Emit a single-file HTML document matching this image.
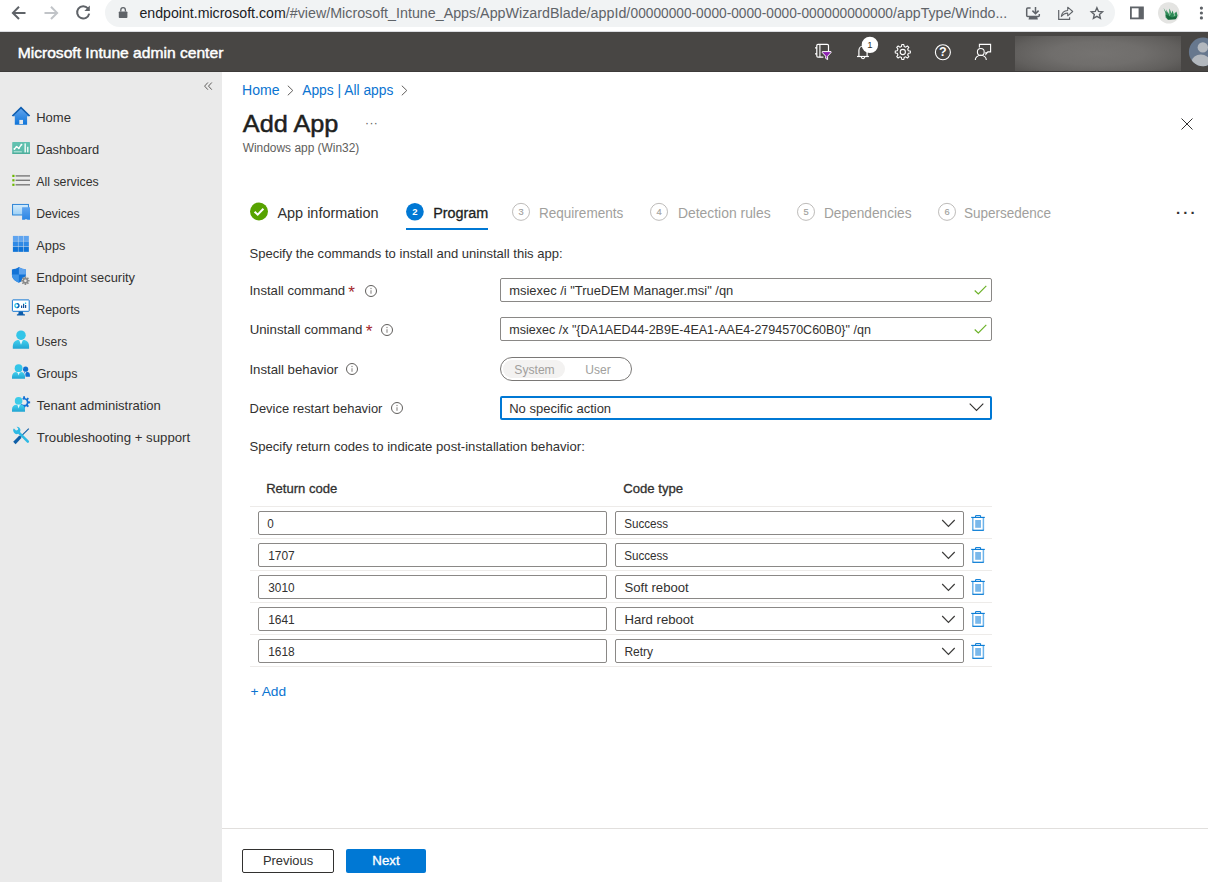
<!DOCTYPE html>
<html lang="en">
<head>
<meta charset="utf-8">
<title>Add App - Microsoft Intune admin center</title>
<style>
*{box-sizing:border-box;margin:0;padding:0}
html,body{width:1208px;height:882px;overflow:hidden;background:#fff}
body{font-family:"Liberation Sans",sans-serif;font-size:13px;color:#323130;position:relative}
.abs{position:absolute;white-space:nowrap}
#chrome{left:0;top:0;width:1208px;height:32px;background:#fff}
#omni{left:105px;top:-2px;width:1010px;height:29px;border-radius:14.5px;background:#f1f3f4}
.url{font-size:14px;line-height:16px;color:#5f6368}
.dk{color:#202124}
#hdr{left:0;top:32px;width:1208px;height:40px;background:#484644;border-bottom:1px solid #3d3b3a}
#title{font-size:15px;line-height:18px;font-weight:normal;-webkit-text-stroke:0.45px #fff;color:#fff}
#acct{left:1015px;top:36px;width:166px;height:35px;background:radial-gradient(ellipse 62% 75% at 50% 50%,#757371 0%,#706e6c 45%,#62605e 80%,#565452 100%)}
#avatar{left:1188px;top:36px}
#side{left:0;top:72px;width:222px;height:810px;background:#eaeaea}
.nav{font-size:13px;line-height:16px;color:#323130}
.lnk{color:#0b74d1}
.t13{font-size:13px;line-height:16px}
.t14{font-size:14px;line-height:18px}
.gray{color:#a19f9d}
#h1{font-size:24px;line-height:32px;font-weight:normal;-webkit-text-stroke:0.5px #201f1e;color:#201f1e}
#sub{font-size:12px;line-height:14px;color:#605e5c}
.inp{position:absolute;border:1px solid #8a8886;border-radius:2px;background:#fff;height:24px;font-size:13px;line-height:24px;padding-left:8px;white-space:nowrap;color:#323130}
.sep{position:absolute;left:250px;width:742px;height:1px;background:#edebe9}
.circ{position:absolute;width:18px;height:18px;border-radius:50%;border:1px solid #bebcba;color:#a19f9d;font-size:10px;line-height:16.5px;text-align:center;-webkit-text-stroke:0.25px #a19f9d}
.btn{height:24px;border-radius:2px;text-align:center;font-size:13px}
.sb{font-weight:normal;-webkit-text-stroke:0.3px currentColor}
</style>
</head>
<body>
<!-- BROWSER CHROME -->
<div id="chrome" class="abs"></div>
<div id="omni" class="abs"></div>
<div class="abs url dk" id="u0" style="left:140px;top:5px;display:inline-block;transform-origin:0 50%;transform:translateX(-0.60px) scaleX(1.0109)">endpoint.microsoft.com</div>
<div class="abs url" id="u1" style="left:286px;top:5px;display:inline-block;transform-origin:0 50%;transform:translateX(-0.20px) scaleX(1.0192)">/#view/Microsoft_Intune_Apps/</div>
<div class="abs url" id="u2" style="left:480px;top:5px;display:inline-block;transform-origin:0 50%;transform:translateX(0.10px) scaleX(1.0213)">AppWizardBlade/appId/</div>
<div class="abs url" id="u3" style="left:630px;top:5px;display:inline-block;transform-origin:0 50%;transform:translateX(0.50px) scaleX(0.9801)">00000000-0000-0000-0000-000000000000</div>
<div class="abs url" id="u4" style="left:893px;top:5px;display:inline-block;transform-origin:0 50%;transform:translateX(0.10px) scaleX(1.0112)">/appType/Windo...</div>
<div class="abs" style="left:0;top:31px;width:1208px;height:1px;background:#dadce0"></div>
<svg class="abs" style="left:0;top:0" width="140" height="31" viewBox="0 0 140 31">
<path d="M25.5 12.9 H13.6 M19 6.8 L12.9 12.9 L19 19" stroke="#5f6368" stroke-width="2" fill="none" stroke-linejoin="miter"/>
<path d="M44.5 12.9 H56.4 M51 6.8 L57.1 12.9 L51 19" stroke="#c1c4c8" stroke-width="2" fill="none"/>
<path d="M87.9 8.4 A6.1 6.1 0 1 0 89.2 13.6" stroke="#5f6368" stroke-width="2" fill="none"/>
<path d="M89.8 5.6 V11 H84.4 Z" fill="#5f6368"/>
<rect x="118.8" y="11.4" width="8.6" height="6.6" rx="0.8" fill="#5f6368"/>
<path d="M120.8 11.6 V10 a2.3 2.3 0 0 1 4.6 0 V11.6" stroke="#5f6368" stroke-width="1.3" fill="none"/>
</svg>
<svg class="abs" style="left:1020px;top:0" width="188" height="31" viewBox="1020 0 188 31">
<!-- install -->
<path d="M1030.6 8 H1027.7 a1 1 0 0 0 -1 1 V15.4 a1 1 0 0 0 1 1 H1038.3 a1 1 0 0 0 1 -1 V14" stroke="#5f6368" stroke-width="1.5" fill="none"/>
<path d="M1029.2 17.1 H1037.2 L1037.9 19.6 H1028.5 Z" fill="#5f6368"/>
<path d="M1035.5 6.9 V13.4 M1032.4 10.6 L1035.5 13.7 L1038.6 10.6" stroke="#5f6368" stroke-width="1.5" fill="none"/>
<!-- share -->
<path d="M1058.7 9.9 V19.3 H1069.6 V17.2" stroke="#5f6368" stroke-width="1.2" fill="none"/>
<path d="M1061.3 16.4 C1061.8 12.8 1064.2 10.8 1067.7 10.5 V7.2 L1072.7 11.5 L1067.7 15.8 V12.9 C1064.9 13 1062.9 14.2 1061.3 16.4 Z" stroke="#5f6368" stroke-width="1.05" fill="none" stroke-linejoin="round"/>
<!-- star -->
<path d="M1096.90 7.70 L1098.49 11.42 L1102.51 11.78 L1099.47 14.43 L1100.37 18.37 L1096.90 16.30 L1093.43 18.37 L1094.33 14.43 L1091.29 11.78 L1095.31 11.42 Z" stroke="#5f6368" stroke-width="1.4" fill="none" stroke-linejoin="miter"/>
<!-- side panel -->
<rect x="1130.9" y="7.4" width="12" height="11" stroke="#5f6368" stroke-width="1.8" fill="none"/>
<rect x="1138.6" y="7.4" width="4.6" height="11" fill="#5f6368"/>
<!-- profile -->
<circle cx="1168.7" cy="12.9" r="10.7" fill="#e4e4e2"/>
<path d="M1163.6 8 L1166.4 12.6 L1166.2 9.4 L1168.6 14 L1169.6 8.6 L1171.4 13.4 L1172.6 10.6 L1173.8 14.2 L1176.4 11.4 L1177.6 15.4 L1176 19 L1168 19.8 L1165.6 17.4 L1165.4 13 Z" fill="#2e8b57"/>
<path d="M1165.6 15 L1168 19.6 L1175.6 19.2 L1177.4 16 L1172 17.6 L1168.4 15.4 Z" fill="#17683c"/>
<path d="M1169.4 9.6 L1170.6 14.2 L1169.2 16.4 Z M1174.4 12.6 L1175.4 15.6 L1173.6 16.6 Z" fill="#8fc7a4"/>
<!-- menu -->
<circle cx="1201.4" cy="8.1" r="1.6" fill="#5f6368"/><circle cx="1201.4" cy="13" r="1.6" fill="#5f6368"/><circle cx="1201.4" cy="17.9" r="1.6" fill="#5f6368"/>
</svg>
<!-- HEADER -->
<div id="hdr" class="abs"></div>
<div class="abs " id="title" style="left:17px;top:44px;display:inline-block;transform-origin:0 50%;transform:translateX(0.71px) scaleX(1.0406)">Microsoft Intune admin center</div>
<div id="acct" class="abs"></div>
<svg id="avatar" class="abs" width="20" height="32" viewBox="1188 36 20 32"><defs><clipPath id="avc"><circle cx="1203.2" cy="51.9" r="14.3"/></clipPath></defs><circle cx="1203.2" cy="51.9" r="14.3" fill="#67788e"/><g clip-path="url(#avc)"><ellipse cx="1200.8" cy="61" rx="8.8" ry="6.4" fill="#b3b8be"/><circle cx="1202.8" cy="47.4" r="6.3" fill="#67788e"/><circle cx="1202.8" cy="47.4" r="5.2" fill="#b3b8be"/></g></svg>
<svg class="abs" style="left:800px;top:32px" width="210" height="40" viewBox="800 32 210 40">
<!-- directory + filter -->
<path d="M828.5 51 V45.6 a1.2 1.2 0 0 0 -1.2 -1.2 H818 a1.2 1.2 0 0 0 -1.2 1.2 V56 a1.2 1.2 0 0 0 1.2 1.2 H823.4" stroke="#fff" stroke-width="1.2" fill="none"/>
<path d="M819.9 44.4 V57.2" stroke="#fff" stroke-width="1.1"/>
<path d="M815 47.9 H817 M815 53.9 H817" stroke="#fff" stroke-width="1.3"/>
<path d="M822.3 51.6 H831 V52.6 L827.6 56.2 V59.6 L825.7 58.4 V56.2 L822.3 52.6 Z" fill="#8c22b0" stroke="#fff" stroke-width="1" stroke-linejoin="round"/>
<!-- bell -->
<path d="M857 56.5 H868.9" stroke="#fff" stroke-width="1.2" fill="none"/>
<path d="M858.9 56.4 V50.6 a4.1 4.6 0 0 1 8.2 0 V56.4" stroke="#fff" stroke-width="1.2" fill="none"/>
<path d="M861.3 57 a1.7 1.6 0 0 0 3.4 0" stroke="#fff" stroke-width="1.1" fill="none"/>
<circle cx="869.9" cy="44.9" r="8.2" fill="#fff"/>
<!-- gear -->
<g stroke="#fff" fill="none" stroke-width="1.1">
<circle cx="902.8" cy="52" r="2.6"/>
<path id="gearp" d="M901.47 46.46 L901.79 44.47 L903.81 44.47 L904.13 46.46 L905.78 47.14 L907.41 45.96 L908.84 47.39 L907.66 49.02 L908.34 50.67 L910.33 50.99 L910.33 53.01 L908.34 53.33 L907.66 54.98 L908.84 56.61 L907.41 58.04 L905.78 56.86 L904.13 57.54 L903.81 59.53 L901.79 59.53 L901.47 57.54 L899.82 56.86 L898.19 58.04 L896.76 56.61 L897.94 54.98 L897.26 53.33 L895.27 53.01 L895.27 50.99 L897.26 50.67 L897.94 49.02 L896.76 47.39 L898.19 45.96 L899.82 47.14 Z" stroke-linejoin="round"/>
</g>
<!-- help -->
<circle cx="942.9" cy="52.3" r="7.5" stroke="#fff" stroke-width="1.1" fill="none"/>
<!-- feedback -->
<path d="M979.4 47.6 V44.4 H990.6 V51.9 H987.8 L985.9 54.2 V51.9" stroke="#fff" stroke-width="1.1" fill="none"/>
<circle cx="980.8" cy="51.9" r="3.4" stroke="#fff" stroke-width="1.1" fill="none"/>
<path d="M975.3 60 a5.5 4.8 0 0 1 11 0" stroke="#fff" stroke-width="1.1" fill="none"/>
</svg>
<div class="abs" style="left:865.8px;top:39.4px;width:8px;text-align:center;font-size:9.5px;line-height:12px;color:#323130">1</div>
<div class="abs" style="left:938.9px;top:44.6px;width:8px;text-align:center;font-size:12.5px;line-height:15px;color:#fff;font-weight:bold">?</div>
<!-- SIDEBAR -->
<div id="side" class="abs"></div>
<svg class="abs" style="left:204px;top:82px" width="9" height="9" viewBox="0 0 9 9"><path d="M3.9 0.5 L0.6 4.1 L3.9 7.7 M7.8 0.5 L4.5 4.1 L7.8 7.7" stroke="#605e5c" stroke-width="1" fill="none"/></svg>
<div class="abs nav" id="n0" style="left:36px;top:110px;display:inline-block;transform-origin:0 50%;transform:translateX(0.13px) scaleX(1.0020)">Home</div>
<div class="abs nav" id="n1" style="left:36px;top:142px;display:inline-block;transform-origin:0 50%;transform:translateX(0.16px) scaleX(0.9895)">Dashboard</div>
<div class="abs nav" id="n2" style="left:36px;top:174px;display:inline-block;transform-origin:0 50%;transform:translateX(0.32px) scaleX(0.9485)">All services</div>
<div class="abs nav" id="n3" style="left:36px;top:206px;display:inline-block;transform-origin:0 50%;transform:translateX(0.25px) scaleX(0.9397)">Devices</div>
<div class="abs nav" id="n4" style="left:36px;top:238px;display:inline-block;transform-origin:0 50%;transform:translateX(0.33px) scaleX(0.9792)">Apps</div>
<div class="abs nav" id="n5" style="left:36px;top:270px;display:inline-block;transform-origin:0 50%;transform:translateX(0.14px) scaleX(0.9916)">Endpoint security</div>
<div class="abs nav" id="n6" style="left:36px;top:302px;display:inline-block;transform-origin:0 50%;transform:translateX(0.18px) scaleX(0.9588)">Reports</div>
<div class="abs nav" id="n7" style="left:36px;top:334px;display:inline-block;transform-origin:0 50%;transform:translateX(0.02px) scaleX(0.9160)">Users</div>
<div class="abs nav" id="n8" style="left:36px;top:366px;display:inline-block;transform-origin:0 50%;transform:translateX(0.63px) scaleX(0.9566)">Groups</div>
<div class="abs nav" id="n9" style="left:36px;top:398px;display:inline-block;transform-origin:0 50%;transform:translateX(0.84px) scaleX(1.0034)">Tenant administration</div>
<div class="abs nav" id="n10" style="left:36px;top:430px;display:inline-block;transform-origin:0 50%;transform:translateX(0.84px) scaleX(1.0159)">Troubleshooting + support</div>
<svg class="abs" style="left:8px;top:100px" width="28" height="350" viewBox="8 100 28 350">
<defs>
<linearGradient id="gb" x1="0" y1="0" x2="0" y2="1"><stop offset="0" stop-color="#0f6cbd"/><stop offset="1" stop-color="#3a96e6"/></linearGradient>
<linearGradient id="gb2" x1="0" y1="0" x2="0" y2="1"><stop offset="0" stop-color="#5ea9ec"/><stop offset="1" stop-color="#0f6cbd"/></linearGradient>
<linearGradient id="gc" x1="0" y1="0" x2="0" y2="1"><stop offset="0" stop-color="#42d0ee"/><stop offset="1" stop-color="#20a4d2"/></linearGradient>
<linearGradient id="gl" x1="0" y1="0" x2="0" y2="1"><stop offset="0" stop-color="#d6ecfb"/><stop offset="1" stop-color="#9dd0f5"/></linearGradient>
<linearGradient id="gh" x1="0" y1="0" x2="0" y2="1"><stop offset="0" stop-color="#5fa4ef"/><stop offset="1" stop-color="#0f74d8"/></linearGradient>
<linearGradient id="gd" x1="0" y1="0" x2="0" y2="1"><stop offset="0" stop-color="#64c2b1"/><stop offset="0.8" stop-color="#5bbba9"/><stop offset="1" stop-color="#48a896"/></linearGradient>
<linearGradient id="gp" x1="0" y1="0" x2="0" y2="1"><stop offset="0" stop-color="#5fa4ef"/><stop offset="1" stop-color="#2a86e4"/></linearGradient>
</defs>
<!-- home -->
<path d="M21 108.4 L29 116.2 H27.1 V124.8 H14.8 V116.2 H13 Z" fill="url(#gh)"/>
<path d="M12.4 116 L21 107.7 L29.6 116" stroke="#0b5cb0" stroke-width="1.7" fill="none"/>
<rect x="19.3" y="119.9" width="3.7" height="4.2" fill="#e6e8ea"/>
<!-- dashboard -->
<rect x="12.2" y="142.1" width="17.8" height="12" rx="0.6" fill="url(#gd)"/>
<path d="M14.2 149.2 L16.6 146.6 L18.8 148.4 L21.6 144.4" stroke="#fff" stroke-width="1.3" fill="none"/>
<circle cx="14.4" cy="149" r="0.9" fill="#fff"/><circle cx="16.6" cy="146.8" r="0.9" fill="#fff"/><circle cx="18.8" cy="148.3" r="0.9" fill="#fff"/><circle cx="21.5" cy="144.6" r="0.9" fill="#fff"/>
<path d="M13.8 151.8 H21.8" stroke="#b9e4db" stroke-width="1.1"/>
<rect x="24.4" y="143.4" width="1.6" height="9" fill="#e4f5f1"/><rect x="27" y="146.8" width="1.5" height="5.6" fill="#e4f5f1"/>
<!-- all services -->
<g fill="#6bb700"><rect x="12.3" y="174.8" width="2.2" height="2.2"/><rect x="12.3" y="179.2" width="2.2" height="2.2"/><rect x="12.3" y="183.7" width="2.2" height="2.2"/></g>
<g fill="#7a7a7a"><rect x="15.6" y="175.2" width="14.4" height="1.4"/><rect x="15.6" y="179.6" width="14.4" height="1.4"/><rect x="15.6" y="184.1" width="14.4" height="1.4"/></g>
<!-- devices -->
<rect x="12.6" y="204.4" width="15.8" height="10.6" fill="url(#gl)" stroke="#1a7ad4" stroke-width="0.9"/>
<path d="M22.1 207.3 H30 V219.8 H27.4 L27 219.3 H25.1 L24.7 219.8 H22.1 Z" fill="url(#gp)"/>
<!-- apps -->
<g><rect x="12.9" y="235.9" width="5.05" height="5.05" fill="#5fa4ef"/><rect x="18.35" y="235.9" width="5.05" height="5.05" fill="#5fa4ef"/><rect x="23.8" y="235.9" width="5.05" height="5.05" fill="#5fa4ef"/><rect x="12.9" y="241.35" width="5.05" height="5.05" fill="#2f8ae6"/><rect x="18.35" y="241.35" width="5.05" height="5.05" fill="#2f8ae6"/><rect x="23.8" y="241.35" width="5.05" height="5.05" fill="#2f8ae6"/><rect x="12.9" y="246.8" width="5.05" height="5.05" fill="#0f74d8"/><rect x="18.35" y="246.8" width="5.05" height="5.05" fill="#0f74d8"/><rect x="23.8" y="246.8" width="5.05" height="5.05" fill="#0f74d8"/></g>
<!-- endpoint security -->
<path d="M18.9 267.1 C16.8 268.6 14.4 269.3 11.9 269.4 V274.6 C11.9 278.6 14.9 281.2 18.9 282.8 C22.9 281.2 25.9 278.6 25.9 274.6 V269.4 C23.4 269.3 21 268.6 18.9 267.1 Z" fill="#1272d6"/>
<path d="M18.9 267.1 C21 268.6 23.4 269.3 25.9 269.4 V274.6 H18.9 Z" fill="#5ea3ee"/>
<path d="M11.9 274.6 H18.9 V282.8 C14.9 281.2 11.9 278.6 11.9 274.6 Z" fill="#3e94e8"/>
<circle cx="25.4" cy="280.8" r="3.4" fill="#8a8a8a" stroke="#eaeaea" stroke-width="0.8"/>
<g stroke="#8a8a8a" stroke-width="1.6"><path d="M25.4 276.6 V285 M21.2 280.8 H29.6 M22.4 277.8 L28.4 283.8 M28.4 277.8 L22.4 283.8"/></g>
<circle cx="25.4" cy="280.8" r="1.3" fill="#eaeaea"/>
<!-- reports -->
<rect x="12.4" y="299.9" width="16.8" height="11.4" rx="0.6" fill="#fff" stroke="#1478d4" stroke-width="1"/>
<path d="M18.8 311.6 H22.8 L23.4 314.3 H24.9 V315.6 H16.9 V314.3 H18.2 Z" fill="#0b5cab"/>
<circle cx="16.9" cy="305.6" r="2" stroke="#2bc0e4" stroke-width="1.2" fill="none"/>
<path d="M16.9 303.6 a2 2 0 0 1 0 4" stroke="#0f5fb8" stroke-width="1.2" fill="none"/>
<path d="M21.6 308 V305.6 M23.6 308 V304 M25.6 308 V305" stroke="#0f4f9a" stroke-width="1.2"/>
<path d="M25.6 304 V302.6 M23.6 303.6 V303" stroke="#2bc0e4" stroke-width="1.2"/>
<!-- users -->
<path d="M12.8 348.8 V346.4 C12.8 342.4 15.4 340 18.6 340 H23.4 C26.6 340 29.1 342.4 29.1 346.4 V348.8 Z" fill="url(#gc)"/>
<circle cx="21" cy="335.2" r="5.4" fill="#eaeaea"/>
<circle cx="21" cy="335.2" r="4.75" fill="#33c5e8"/>
<path d="M19.2 340 L21 344.8 L22.8 340 Z" fill="#eaf7fb"/>
<!-- groups -->
<circle cx="25.6" cy="369.2" r="2.6" fill="#0f6fd0"/>
<path d="M22.6 376.7 V375 C22.6 373 23.8 372 25.2 372 H27.4 C28.8 372 29.9 373 29.9 375 V376.7 Z" fill="#0f6fd0"/>
<path d="M24.9 372 L25.6 374.4 L26.3 372 Z" fill="#cfe4f8"/>
<path d="M11.4 379.3 V376.4 C11.4 373.2 13.6 371.3 16 371.3 H21.2 C23.6 371.3 25.6 373.2 25.6 376.4 V379.3 Z" fill="#eaeaea"/>
<path d="M12 378.7 V376.6 C12 373.6 14 371.9 16.2 371.9 H21 C23.2 371.9 25 373.6 25 376.6 V378.7 Z" fill="url(#gc)"/>
<circle cx="18.6" cy="368.2" r="4.5" fill="#eaeaea"/>
<circle cx="18.6" cy="368.2" r="3.9" fill="#33c5e8"/>
<path d="M17.3 371.9 L18.6 375.6 L19.9 371.9 Z" fill="#eaf7fb"/>
<!-- tenant admin -->
<path d="M23.07 398.12 L23.24 396.36 L24.96 396.36 L25.13 398.12 L26.40 398.65 L27.76 397.52 L28.98 398.74 L27.85 400.10 L28.38 401.37 L30.14 401.54 L30.14 403.26 L28.38 403.43 L27.85 404.70 L28.98 406.06 L27.76 407.28 L26.40 406.15 L25.13 406.68 L24.96 408.44 L23.24 408.44 L23.07 406.68 L21.80 406.15 L20.44 407.28 L19.22 406.06 L20.35 404.70 L19.82 403.43 L18.06 403.26 L18.06 401.54 L19.82 401.37 L20.35 400.10 L19.22 398.74 L20.44 397.52 L21.80 398.65 Z" fill="#1170d6"/>
<circle cx="24.1" cy="402.2" r="2.6" fill="#eaeaea"/>
<circle cx="18.6" cy="400.9" r="4.5" fill="#eaeaea"/>
<circle cx="18.6" cy="400.9" r="3.8" fill="#3ccbe8"/>
<path d="M12 411.8 V409.4 C12 406.4 14 404.8 16.4 404.8 H20.8 C23.2 404.8 25 406.4 25 409.4 V411.8 Z" fill="url(#gc)"/>
<path d="M17.3 404.8 L18.6 408.6 L19.9 404.8 Z" fill="#eaf7fb"/>
<!-- troubleshooting -->
<path d="M28.4 428.2 L29.2 429 L20.6 437.6 L19.8 436.8 Z" fill="#0f5fa8"/>
<path d="M19.4 435.6 L21.6 437.8 L15.6 444.2 L13.2 441.8 Z" fill="#0f5fa8"/>
<path d="M13.2 430.6 C13 429.6 13.4 428.8 14 428.4 L16 430.4 L17.8 430 L18.2 428.4 L16.6 426.8 C18.4 426.6 20 427.8 20.4 429.6 C20.6 430.6 20.4 431.4 20 432 L28.8 440.8 C29.8 441.8 28.2 443.6 27 442.6 L18.2 433.8 C17.4 434.2 16.4 434.2 15.6 434 C14.2 433.4 13.4 432 13.2 430.6 Z" fill="#2db9e4"/>
</svg>
<!-- CONTENT -->
<div class="abs t14 lnk" id="bc1" style="left:242px;top:81px;display:inline-block;transform-origin:0 50%;transform:translateX(0.02px) scaleX(1.0048)">Home</div>
<svg class="abs" style="left:287px;top:85px" width="7" height="11" viewBox="0 0 7 11"><path d="M0.8 0.7 L5.8 5.5 L0.8 10.3" stroke="#605e5c" stroke-width="1" fill="none"/></svg>
<div class="abs t14 lnk" id="bc2" style="left:302px;top:81px;display:inline-block;transform-origin:0 50%;transform:translateX(0.17px) scaleX(0.9873)">Apps | All apps</div>
<svg class="abs" style="left:401px;top:85px" width="7" height="11" viewBox="0 0 7 11"><path d="M0.8 0.7 L5.8 5.5 L0.8 10.3" stroke="#605e5c" stroke-width="1" fill="none"/></svg>
<div class="abs " id="h1" style="left:242px;top:108px;display:inline-block;transform-origin:0 50%;transform:translateX(0.85px) scaleX(1.0526)">Add App</div>
<div class="abs" id="h1dots" style="left:365px;top:115px;font-size:12px;line-height:16px;color:#605e5c;letter-spacing:0.4px">···</div>
<div class="abs " id="sub" style="left:242px;top:141px;display:inline-block;transform-origin:0 50%;transform:translateX(0.70px) scaleX(0.9935)">Windows app (Win32)</div>
<svg class="abs" style="left:1180px;top:117px" width="14" height="14" viewBox="0 0 14 14"><path d="M1.5 1.5 L12.5 12.5 M12.5 1.5 L1.5 12.5" stroke="#323130" stroke-width="1" fill="none"/></svg>
<!-- tabs -->
<svg class="abs" style="left:250px;top:202px" width="18" height="19" viewBox="0 0 18 19"><circle cx="9" cy="9.5" r="9" fill="#57a300"/><path d="M4.6 9.7 L7.7 12.7 L13.4 6.7" stroke="#fff" stroke-width="2" fill="none"/></svg>
<div class="abs t14" id="tab1" style="left:277px;top:204px;display:inline-block;transform-origin:0 50%;transform:translateX(0.44px) scaleX(1.0316);color:#323130">App information</div>
<svg class="abs" style="left:404px;top:200px" width="22" height="24" viewBox="0 0 22 24"><circle cx="10.9" cy="11.75" r="8.85" fill="#0078d4"/><text x="10.9" y="15.1" text-anchor="middle" font-family="Liberation Sans, sans-serif" font-size="9.5" font-weight="bold" fill="#fff">2</text></svg>
<div class="abs t14 sb" id="tab2" style="left:433px;top:204px;display:inline-block;transform-origin:0 50%;transform:translateX(0.21px) scaleX(1.0270);color:#201f1e">Program</div>
<div class="abs" style="left:406px;top:227.6px;width:82px;height:2.4px;background:#0078d4"></div>
<svg class="abs" style="left:511px;top:200px" width="22" height="24" viewBox="0 0 22 24"><circle cx="10" cy="11.85" r="8.5" fill="none" stroke="#bebcba" stroke-width="1"/><text x="10.1" y="15" text-anchor="middle" font-family="Liberation Sans, sans-serif" font-size="9.3" fill="#a19f9d" stroke="#a19f9d" stroke-width="0.15">3</text></svg>
<div class="abs t14 gray" id="tab3" style="left:539px;top:204px;display:inline-block;transform-origin:0 50%;transform:translateX(-0.05px) scaleX(0.9674)">Requirements</div>
<svg class="abs" style="left:649px;top:200px" width="22" height="24" viewBox="0 0 22 24"><circle cx="10" cy="11.85" r="8.5" fill="none" stroke="#bebcba" stroke-width="1"/><text x="10.1" y="15" text-anchor="middle" font-family="Liberation Sans, sans-serif" font-size="9.3" fill="#a19f9d" stroke="#a19f9d" stroke-width="0.15">4</text></svg>
<div class="abs t14 gray" id="tab4" style="left:677px;top:204px;display:inline-block;transform-origin:0 50%;transform:translateX(0.92px) scaleX(0.9930)">Detection rules</div>
<svg class="abs" style="left:796px;top:200px" width="22" height="24" viewBox="0 0 22 24"><circle cx="10" cy="11.85" r="8.5" fill="none" stroke="#bebcba" stroke-width="1"/><text x="10.1" y="15" text-anchor="middle" font-family="Liberation Sans, sans-serif" font-size="9.3" fill="#a19f9d" stroke="#a19f9d" stroke-width="0.15">5</text></svg>
<div class="abs t14 gray" id="tab5" style="left:824px;top:204px;display:inline-block;transform-origin:0 50%;transform:translateX(-0.05px) scaleX(0.9790)">Dependencies</div>
<svg class="abs" style="left:937px;top:200px" width="22" height="24" viewBox="0 0 22 24"><circle cx="10" cy="11.85" r="8.5" fill="none" stroke="#bebcba" stroke-width="1"/><text x="10.1" y="15" text-anchor="middle" font-family="Liberation Sans, sans-serif" font-size="9.3" fill="#a19f9d" stroke="#a19f9d" stroke-width="0.15">6</text></svg>
<div class="abs t14 gray" id="tab6" style="left:964px;top:204px;display:inline-block;transform-origin:0 50%;transform:translateX(-0.10px) scaleX(0.9658)">Supersedence</div>
<div class="abs" id="tabdots" style="left:1176px;top:204.5px;font-size:15px;line-height:16px;color:#323130;letter-spacing:2.2px;font-weight:bold">···</div>
<!-- form -->
<div class="abs t13" id="p1" style="left:250px;top:246px;display:inline-block;transform-origin:0 50%;transform:translateX(-0.51px) scaleX(1.0029)">Specify the commands to install and uninstall this app:</div>
<div class="abs t13" id="l1" style="left:250px;top:283px;display:inline-block;transform-origin:0 50%;transform:translateX(-0.56px) scaleX(1.0106)">Install command <span style="color:#a4262c;font-size:17px;line-height:0;position:relative;top:3px;left:-0.5px">*</span></div>
<svg class="abs" style="left:364px;top:283.8px" width="14" height="14" viewBox="0 0 14 14"><circle cx="7" cy="7" r="5.5" stroke="#605e5c" stroke-width="1" fill="none"/><path d="M7 6.2 V9.8" stroke="#8a8886" stroke-width="1.1"/><circle cx="7" cy="4.5" r="0.7" fill="#8a8886"/></svg>
<div class="inp" style="left:500px;top:278px;width:492px"><span id="i1" style="display:inline-block;transform-origin:0 50%;transform:translateX(0.22px) scaleX(0.9936)">msiexec /i "TrueDEM Manager.msi" /qn</span></div>
<div class="abs t13" id="l2" style="left:250px;top:322px;display:inline-block;transform-origin:0 50%;transform:translateX(-0.34px) scaleX(1.0206)">Uninstall command <span style="color:#a4262c;font-size:17px;line-height:0;position:relative;top:3px;left:-0.5px">*</span></div>
<svg class="abs" style="left:380px;top:322.7px" width="14" height="14" viewBox="0 0 14 14"><circle cx="7" cy="7" r="5.5" stroke="#605e5c" stroke-width="1" fill="none"/><path d="M7 6.2 V9.8" stroke="#8a8886" stroke-width="1.1"/><circle cx="7" cy="4.5" r="0.7" fill="#8a8886"/></svg>
<div class="inp" style="left:500px;top:317px;width:492px"><span id="i2" style="display:inline-block;transform-origin:0 50%;transform:translateX(0.30px) scaleX(0.9626)">msiexec /x "{DA1AED44-2B9E-4EA1-AAE4-2794570C60B0}" /qn</span></div>
<div class="abs t13" id="l3" style="left:250px;top:362px;display:inline-block;transform-origin:0 50%;transform:translateX(-0.58px) scaleX(1.0160)">Install behavior</div>
<svg class="abs" style="left:345.1px;top:361.9px" width="14" height="14" viewBox="0 0 14 14"><circle cx="7" cy="7" r="5.5" stroke="#605e5c" stroke-width="1" fill="none"/><path d="M7 6.2 V9.8" stroke="#8a8886" stroke-width="1.1"/><circle cx="7" cy="4.5" r="0.7" fill="#8a8886"/></svg>
<div class="abs" style="left:500px;top:357px;width:132px;height:24px;border:1px solid #7a7876;border-radius:12px;background:#fff"></div>
<div class="abs" style="left:502.5px;top:360px;width:62px;height:18px;border-radius:9px;background:#f3f2f1"></div>
<div class="abs t13 gray" id="tg1" style="left:514px;top:362px;display:inline-block;transform-origin:0 50%;transform:translateX(0.31px) scaleX(0.9323)">System</div>
<div class="abs t13 gray" id="tg2" style="left:585px;top:362px;display:inline-block;transform-origin:0 50%;transform:translateX(0.33px) scaleX(0.9254)">User</div>
<div class="abs t13" id="l4" style="left:250px;top:401px;display:inline-block;transform-origin:0 50%;transform:translateX(-0.41px) scaleX(0.9937)">Device restart behavior</div>
<svg class="abs" style="left:390.1px;top:400.9px" width="14" height="14" viewBox="0 0 14 14"><circle cx="7" cy="7" r="5.5" stroke="#605e5c" stroke-width="1" fill="none"/><path d="M7 6.2 V9.8" stroke="#8a8886" stroke-width="1.1"/><circle cx="7" cy="4.5" r="0.7" fill="#8a8886"/></svg>
<div class="inp" style="left:500px;top:396px;width:492px;height:24px;border:2px solid #0078d4;padding-left:7px;line-height:22px"><span id="i3" style="display:inline-block;transform-origin:0 50%;transform:translateX(0.19px) scaleX(1.0003)">No specific action</span></div>
<div class="abs t13" id="p2" style="left:250px;top:439px;display:inline-block;transform-origin:0 50%;transform:translateX(-0.59px) scaleX(1.0089)">Specify return codes to indicate post-installation behavior:</div>
<div class="abs t13 sb" id="th1" style="left:266px;top:481px;display:inline-block;transform-origin:0 50%;transform:translateX(0.17px) scaleX(1.0051);color:#323130">Return code</div>
<div class="abs t13 sb" id="th2" style="left:623px;top:481px;display:inline-block;transform-origin:0 50%;transform:translateX(0.27px) scaleX(1.0104);color:#323130">Code type</div>
<div class="sep" style="top:506px"></div>
<div class="inp" style="left:258px;top:511px;width:349px;line-height:23px"><span id="ra0" style="display:inline-block;transform-origin:0 50%;transform:translateX(0.37px) scaleX(0.8969)">0</span></div>
<div class="inp" style="left:615px;top:511px;width:349px;line-height:23px"><span id="rb0" style="display:inline-block;transform-origin:0 50%;transform:translateX(0.19px) scaleX(0.8951)">Success</span></div>
<svg class="abs" style="left:941px;top:519px" width="15" height="9" viewBox="0 0 15 9"><path d="M1.2 1 L7.45 7.4 L13.7 1" stroke="#3b3a39" stroke-width="1.15" fill="none"/></svg>
<svg class="abs" style="left:970px;top:514px" width="16" height="18" viewBox="970 514 16 18"><path d="M971.2 517.4 H984.8" stroke="#0078d4" stroke-width="1.1" fill="none"/><path d="M975.6 517 V515.6 H980.6 V517" stroke="#0078d4" stroke-width="1" fill="none"/><path d="M972.8 518 V530.2 M983.4 518 V530.2" stroke="#6db3ea" stroke-width="1.5" fill="none"/><path d="M972.4 530.3 H983.8" stroke="#0078d4" stroke-width="1.2"/><rect x="975.2" y="520" width="5.8" height="7.8" fill="#7ab8ea"/></svg>
<div class="sep" style="top:538px"></div>
<div class="inp" style="left:258px;top:543px;width:349px;line-height:23px"><span id="ra1" style="display:inline-block;transform-origin:0 50%;transform:translateX(1.17px) scaleX(0.9186)">1707</span></div>
<div class="inp" style="left:615px;top:543px;width:349px;line-height:23px"><span id="rb1" style="display:inline-block;transform-origin:0 50%;transform:translateX(0.19px) scaleX(0.8951)">Success</span></div>
<svg class="abs" style="left:941px;top:551px" width="15" height="9" viewBox="0 0 15 9"><path d="M1.2 1 L7.45 7.4 L13.7 1" stroke="#3b3a39" stroke-width="1.15" fill="none"/></svg>
<svg class="abs" style="left:970px;top:546px" width="16" height="18" viewBox="970 514 16 18"><path d="M971.2 517.4 H984.8" stroke="#0078d4" stroke-width="1.1" fill="none"/><path d="M975.6 517 V515.6 H980.6 V517" stroke="#0078d4" stroke-width="1" fill="none"/><path d="M972.8 518 V530.2 M983.4 518 V530.2" stroke="#6db3ea" stroke-width="1.5" fill="none"/><path d="M972.4 530.3 H983.8" stroke="#0078d4" stroke-width="1.2"/><rect x="975.2" y="520" width="5.8" height="7.8" fill="#7ab8ea"/></svg>
<div class="sep" style="top:570px"></div>
<div class="inp" style="left:258px;top:575px;width:349px;line-height:23px"><span id="ra2" style="display:inline-block;transform-origin:0 50%;transform:translateX(1.28px) scaleX(0.9080)">3010</span></div>
<div class="inp" style="left:615px;top:575px;width:349px;line-height:23px"><span id="rb2" style="display:inline-block;transform-origin:0 50%;transform:translateX(0.49px) scaleX(1.0099)">Soft reboot</span></div>
<svg class="abs" style="left:941px;top:583px" width="15" height="9" viewBox="0 0 15 9"><path d="M1.2 1 L7.45 7.4 L13.7 1" stroke="#3b3a39" stroke-width="1.15" fill="none"/></svg>
<svg class="abs" style="left:970px;top:578px" width="16" height="18" viewBox="970 514 16 18"><path d="M971.2 517.4 H984.8" stroke="#0078d4" stroke-width="1.1" fill="none"/><path d="M975.6 517 V515.6 H980.6 V517" stroke="#0078d4" stroke-width="1" fill="none"/><path d="M972.8 518 V530.2 M983.4 518 V530.2" stroke="#6db3ea" stroke-width="1.5" fill="none"/><path d="M972.4 530.3 H983.8" stroke="#0078d4" stroke-width="1.2"/><rect x="975.2" y="520" width="5.8" height="7.8" fill="#7ab8ea"/></svg>
<div class="sep" style="top:602px"></div>
<div class="inp" style="left:258px;top:607px;width:349px;line-height:23px"><span id="ra3" style="display:inline-block;transform-origin:0 50%;transform:translateX(1.17px) scaleX(0.9177)">1641</span></div>
<div class="inp" style="left:615px;top:607px;width:349px;line-height:23px"><span id="rb3" style="display:inline-block;transform-origin:0 50%;transform:translateX(0.41px) scaleX(1.0103)">Hard reboot</span></div>
<svg class="abs" style="left:941px;top:615px" width="15" height="9" viewBox="0 0 15 9"><path d="M1.2 1 L7.45 7.4 L13.7 1" stroke="#3b3a39" stroke-width="1.15" fill="none"/></svg>
<svg class="abs" style="left:970px;top:610px" width="16" height="18" viewBox="970 514 16 18"><path d="M971.2 517.4 H984.8" stroke="#0078d4" stroke-width="1.1" fill="none"/><path d="M975.6 517 V515.6 H980.6 V517" stroke="#0078d4" stroke-width="1" fill="none"/><path d="M972.8 518 V530.2 M983.4 518 V530.2" stroke="#6db3ea" stroke-width="1.5" fill="none"/><path d="M972.4 530.3 H983.8" stroke="#0078d4" stroke-width="1.2"/><rect x="975.2" y="520" width="5.8" height="7.8" fill="#7ab8ea"/></svg>
<div class="sep" style="top:634px"></div>
<div class="inp" style="left:258px;top:639px;width:349px;line-height:23px"><span id="ra4" style="display:inline-block;transform-origin:0 50%;transform:translateX(1.17px) scaleX(0.9169)">1618</span></div>
<div class="inp" style="left:615px;top:639px;width:349px;line-height:23px"><span id="rb4" style="display:inline-block;transform-origin:0 50%;transform:translateX(0.38px) scaleX(0.9234)">Retry</span></div>
<svg class="abs" style="left:941px;top:647px" width="15" height="9" viewBox="0 0 15 9"><path d="M1.2 1 L7.45 7.4 L13.7 1" stroke="#3b3a39" stroke-width="1.15" fill="none"/></svg>
<svg class="abs" style="left:970px;top:642px" width="16" height="18" viewBox="970 514 16 18"><path d="M971.2 517.4 H984.8" stroke="#0078d4" stroke-width="1.1" fill="none"/><path d="M975.6 517 V515.6 H980.6 V517" stroke="#0078d4" stroke-width="1" fill="none"/><path d="M972.8 518 V530.2 M983.4 518 V530.2" stroke="#6db3ea" stroke-width="1.5" fill="none"/><path d="M972.4 530.3 H983.8" stroke="#0078d4" stroke-width="1.2"/><rect x="975.2" y="520" width="5.8" height="7.8" fill="#7ab8ea"/></svg>
<div class="sep" style="top:666px"></div>
<div class="abs t13 lnk" id="add" style="left:251px;top:684px;display:inline-block;transform-origin:0 50%;transform:translateX(-0.39px) scaleX(1.0544)">+ Add</div>
<svg class="abs" style="left:969px;top:403px" width="15" height="9" viewBox="0 0 15 9"><path d="M0.7 0.7 L7.5 7.5 L14.3 0.7" stroke="#323130" stroke-width="1.1" fill="none"/></svg>
<svg class="abs" style="left:974px;top:285px" width="13" height="10" viewBox="0 0 13 10"><path d="M0.7 5.5 L4.3 9 L12.3 0.8" stroke="#6bb127" stroke-width="1.15" fill="none"/></svg>
<svg class="abs" style="left:974px;top:324px" width="13" height="10" viewBox="0 0 13 10"><path d="M0.7 5.5 L4.3 9 L12.3 0.8" stroke="#6bb127" stroke-width="1.15" fill="none"/></svg>
<!-- footer -->
<div class="abs" style="left:222px;top:828px;width:986px;height:1px;background:#e1dfdd"></div>
<div class="abs btn" style="left:242px;top:849px;width:92px;border:1px solid #323130;background:#fff;line-height:22px;color:#323130"><span id="prev" style="display:inline-block;transform-origin:0 50%;transform:translateX(-0.11px) scaleX(0.9930)">Previous</span></div>
<div class="abs btn" style="left:346px;top:849px;width:80px;background:#0078d4;line-height:24px;color:#fff;-webkit-text-stroke:0.35px #fff"><span id="next" style="display:inline-block;transform-origin:0 50%;transform:translateX(-0.68px) scaleX(1.0195)">Next</span></div>
</body>
</html>
